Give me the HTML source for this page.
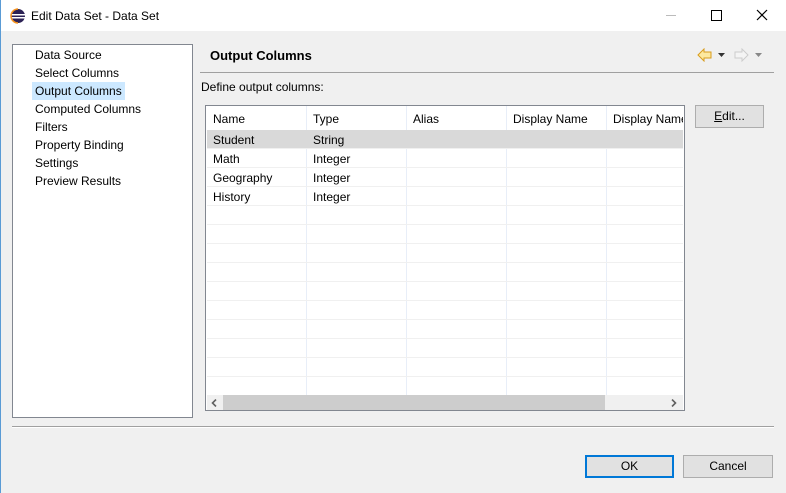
<!DOCTYPE html><html><head><style>
body{margin:0;width:786px;height:493px;background:#f0f0f0;font-family:"Liberation Sans",sans-serif;font-size:12px;color:#000;position:relative;overflow:hidden}
.a{position:absolute}
.tb{left:0;top:0;width:786px;height:31px;background:#fff}
.tree div{position:absolute;left:22px;height:18px;line-height:18px}
.btn{position:absolute;background:#e1e1e1;border:1px solid #adadad;text-align:center;box-sizing:border-box}
.row{position:absolute;left:1px;width:476px;height:19px;border-bottom:1px solid #f0f0f0;box-sizing:border-box}
.cell{position:absolute;top:1px;line-height:18px}
.vl{position:absolute;top:0;width:1px;background:#e8eef8}
</style></head><body>
<div class="a tb"></div>
<div class="a" style="left:0;top:0;width:1px;height:493px;background:#5a9bd5"></div>
<svg class="a" style="left:10px;top:8px" width="16" height="16"><circle cx="8" cy="8" r="7" fill="#2c2255"/><rect x="1" y="6" width="14" height="1.5" fill="#fff"/><rect x="1" y="9" width="14" height="1.5" fill="#fff"/><path d="M8 1a7 7 0 0 0 0 14" fill="none" stroke="#f7941e" stroke-width="1.5"/></svg>
<div class="a" style="left:31px;top:9px;font-size:12px">Edit Data Set - Data Set</div>
<div class="a" style="left:666px;top:15px;width:10px;height:1px;background:#bbb"></div>
<div class="a" style="left:711px;top:10px;width:9px;height:9px;border:1px solid #000"></div>
<svg class="a" style="left:756px;top:9px" width="12" height="12"><path d="M1 1L11 11M11 1L1 11" stroke="#000" stroke-width="1.2"/></svg>
<div class="a tree" style="left:12px;top:44px;width:179px;height:372px;background:#fff;border:1px solid #828790">
<div style="top:1px">Data Source</div><div style="top:19px">Select Columns</div>
<div style="top:37px;background:#cce8ff;padding:0 3px;left:19px">Output Columns</div>
<div style="top:55px">Computed Columns</div><div style="top:73px">Filters</div><div style="top:91px">Property Binding</div><div style="top:109px">Settings</div><div style="top:127px">Preview Results</div></div>
<div class="a" style="left:210px;top:48px;font-weight:bold;font-size:13px">Output Columns</div>
<svg class="a" style="left:697px;top:48px" width="70" height="14"><path d="M1 7L7 1V4H14V10H7V13Z" fill="#fde9a0" stroke="#d89c1c"/><path d="M21 5h7l-3.5 4z" fill="#333"/><path d="M51 7L45 1V4H38V10H45V13Z" fill="#f4f4f4" stroke="#ccc"/><path d="M58 5h7l-3.5 4z" fill="#888"/></svg>
<div class="a" style="left:200px;top:72px;width:574px;height:1px;background:#a0a0a0"></div>
<div class="a" style="left:201px;top:80px">Define output columns:</div>
<div class="a" style="left:205px;top:105px;width:478px;height:304px;background:#fff;border:1px solid #828790">
<div class="vl" style="left:100px;height:290px"></div><div class="vl" style="left:200px;height:290px"></div><div class="vl" style="left:300px;height:290px"></div><div class="vl" style="left:400px;height:290px"></div>
<div class="row" style="top:0;height:24px;border:0"><div class="cell" style="left:6px;top:4px">Name</div><div class="cell" style="left:106px;top:4px">Type</div><div class="cell" style="left:206px;top:4px">Alias</div><div class="cell" style="left:306px;top:4px">Display Name</div><div class="cell" style="left:406px;top:4px;width:70px;overflow:hidden;white-space:nowrap">Display Name</div></div>
<div class="row" style="top:24px;background:#d9d9d9"><div class="cell" style="left:6px">Student</div><div class="cell" style="left:106px">String</div></div>
<div class="row" style="top:43px"><div class="cell" style="left:6px">Math</div><div class="cell" style="left:106px">Integer</div></div>
<div class="row" style="top:62px"><div class="cell" style="left:6px">Geography</div><div class="cell" style="left:106px">Integer</div></div>
<div class="row" style="top:81px"><div class="cell" style="left:6px">History</div><div class="cell" style="left:106px">Integer</div></div>
<div class="row" style="top:100px"></div><div class="row" style="top:119px"></div><div class="row" style="top:138px"></div><div class="row" style="top:157px"></div><div class="row" style="top:176px"></div><div class="row" style="top:195px"></div><div class="row" style="top:214px"></div><div class="row" style="top:233px"></div><div class="row" style="top:252px"></div><div class="row" style="top:271px"></div>
<div class="a" style="left:1px;top:289px;width:476px;height:15px;background:#f0f0f0"></div>
<div class="a" style="left:17px;top:289px;width:382px;height:15px;background:#cdcdcd"></div>
<svg class="a" style="left:5px;top:293px" width="6" height="8"><path d="M5 0.5L1.5 4L5 7.5" fill="none" stroke="#606060" stroke-width="1.6"/></svg>
<svg class="a" style="left:465px;top:293px" width="6" height="8"><path d="M1 0.5L4.5 4L1 7.5" fill="none" stroke="#606060" stroke-width="1.6"/></svg>
</div>
<div class="btn" style="left:695px;top:105px;width:69px;height:23px;line-height:21px"><u>E</u>dit...</div>
<div class="a" style="left:12px;top:426px;width:762px;height:1px;background:#a0a0a0"></div>
<div class="a" style="left:12px;top:427px;width:762px;height:1px;background:#fff"></div>
<div class="btn" style="left:585px;top:455px;width:89px;height:23px;line-height:19px;border:2px solid #0078d7">OK</div>
<div class="btn" style="left:683px;top:455px;width:90px;height:23px;line-height:21px">Cancel</div>
</body></html>
